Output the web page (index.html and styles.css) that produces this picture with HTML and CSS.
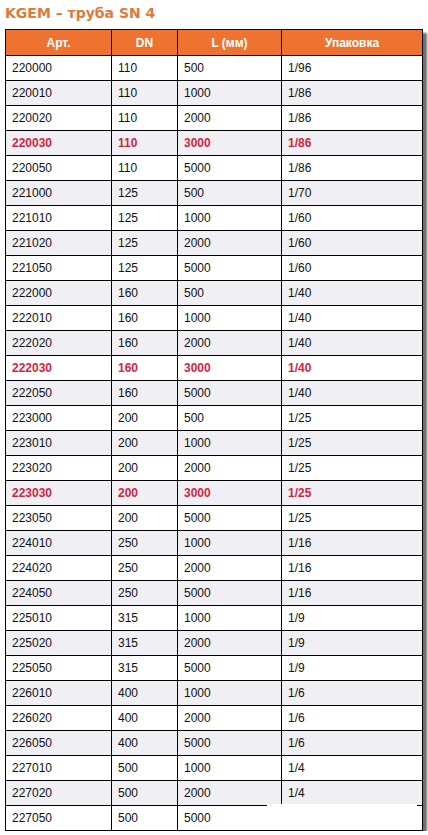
FILE: index.html
```html
<!DOCTYPE html>
<html lang="ru">
<head>
<meta charset="utf-8">
<title>KGEM – труба SN 4</title>
<link rel="stylesheet" href="styles.css">
</head>
<body>
<div class="page">
  <h1 class="title">KGEM – труба SN 4</h1>
  <div class="table-wrap">
    <table class="spec">
      <colgroup>
        <col class="c1"><col class="c2"><col class="c3"><col class="c4">
      </colgroup>
      <thead>
        <tr><th>Арт.</th><th>DN</th><th>L (мм)</th><th>Упаковка</th></tr>
      </thead>
      <tbody>
        <tr><td>220000</td><td>110</td><td>500</td><td>1/96</td></tr>
        <tr><td>220010</td><td>110</td><td>1000</td><td>1/86</td></tr>
        <tr><td>220020</td><td>110</td><td>2000</td><td>1/86</td></tr>
        <tr class="hot"><td>220030</td><td>110</td><td>3000</td><td>1/86</td></tr>
        <tr><td>220050</td><td>110</td><td>5000</td><td>1/86</td></tr>
        <tr><td>221000</td><td>125</td><td>500</td><td>1/70</td></tr>
        <tr><td>221010</td><td>125</td><td>1000</td><td>1/60</td></tr>
        <tr><td>221020</td><td>125</td><td>2000</td><td>1/60</td></tr>
        <tr><td>221050</td><td>125</td><td>5000</td><td>1/60</td></tr>
        <tr><td>222000</td><td>160</td><td>500</td><td>1/40</td></tr>
        <tr><td>222010</td><td>160</td><td>1000</td><td>1/40</td></tr>
        <tr><td>222020</td><td>160</td><td>2000</td><td>1/40</td></tr>
        <tr class="hot"><td>222030</td><td>160</td><td>3000</td><td>1/40</td></tr>
        <tr><td>222050</td><td>160</td><td>5000</td><td>1/40</td></tr>
        <tr><td>223000</td><td>200</td><td>500</td><td>1/25</td></tr>
        <tr><td>223010</td><td>200</td><td>1000</td><td>1/25</td></tr>
        <tr><td>223020</td><td>200</td><td>2000</td><td>1/25</td></tr>
        <tr class="hot"><td>223030</td><td>200</td><td>3000</td><td>1/25</td></tr>
        <tr><td>223050</td><td>200</td><td>5000</td><td>1/25</td></tr>
        <tr><td>224010</td><td>250</td><td>1000</td><td>1/16</td></tr>
        <tr><td>224020</td><td>250</td><td>2000</td><td>1/16</td></tr>
        <tr><td>224050</td><td>250</td><td>5000</td><td>1/16</td></tr>
        <tr><td>225010</td><td>315</td><td>1000</td><td>1/9</td></tr>
        <tr><td>225020</td><td>315</td><td>2000</td><td>1/9</td></tr>
        <tr><td>225050</td><td>315</td><td>5000</td><td>1/9</td></tr>
        <tr><td>226010</td><td>400</td><td>1000</td><td>1/6</td></tr>
        <tr><td>226020</td><td>400</td><td>2000</td><td>1/6</td></tr>
        <tr><td>226050</td><td>400</td><td>5000</td><td>1/6</td></tr>
        <tr><td>227010</td><td>500</td><td>1000</td><td>1/4</td></tr>
        <tr><td>227020</td><td>500</td><td>2000</td><td>1/4</td></tr>
        <tr><td>227050</td><td>500</td><td>5000</td><td></td></tr>
      </tbody>
    </table>
    <div class="patch"></div>
  </div>
</div>
</body>
</html>
```
FILE: styles.css
```css
html, body {
  margin: 0;
  padding: 0;
  background: #ffffff;
}

.page {
  padding: 0 0 0 5px;
  font-family: "Liberation Sans", Arial, sans-serif;
}

.title {
  margin: 0 0 7px 0;
  padding-top: 5px;
  font-family: "DejaVu Sans", Verdana, sans-serif;
  font-weight: bold;
  font-size: 14px;
  line-height: 17px;
  color: #e0793b;
}

.table-wrap {
  position: relative;
  width: 418px;
  box-shadow: 4px 4px 2px rgba(60, 60, 60, 0.75);
}

.spec {
  width: 418px;
  table-layout: fixed;
  border-collapse: separate;
  border-spacing: 0;
  border-left: 1px solid #000;
  border-top: 1px solid #000;
  font-size: 12px;
  color: #111;
}

.c1 { width: 106px; }
.c2 { width: 66px; }
.c3 { width: 104px; }
.c4 { width: 141px; }

.spec th,
.spec td {
  border-right: 1px solid #000;
  border-bottom: 1px solid #000;
  padding: 0 6px;
  vertical-align: middle;
  text-align: left;
  white-space: nowrap;
}

.spec th {
  height: 25px;
  background: #ee7331;
  color: #ffffff;
  font-weight: bold;
  text-align: center;
}

.spec td {
  height: 24px;
  background: #ffffff;
}

.spec tbody tr:nth-child(even) td {
  background: #efeff4;
}

.spec tr.hot td {
  color: #d81e3c;
  font-weight: bold;
}

.patch {
  position: absolute;
  left: 262px;
  top: 775px;
  width: 150px;
  height: 26px;
  background: #ffffff;
}
```
